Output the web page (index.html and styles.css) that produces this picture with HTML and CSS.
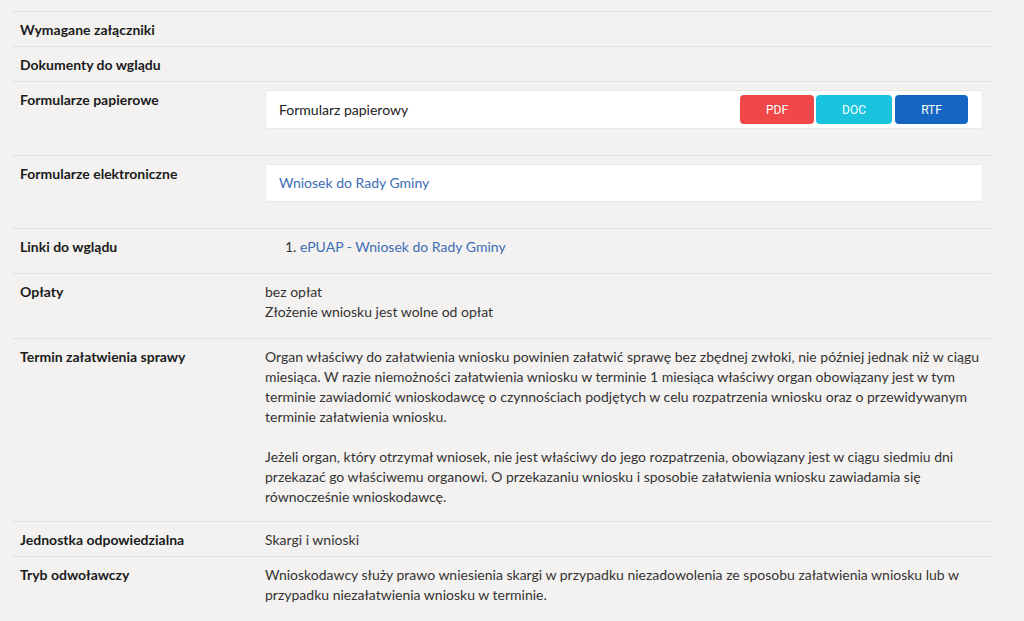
FILE: index.html
```html
<!DOCTYPE html>
<html lang="pl">
<head>
    <meta charset="UTF-8">
    <meta name="viewport" content="width=device-width, initial-scale=1.0">
    <title>Wniosek do Rady Gminy</title>
    <link rel="stylesheet" href="styles.css">
</head>
<body>
    <div class="details">
        <div class="row">
            <div class="label">Wymagane załączniki</div>
            <div class="value"></div>
        </div>
        <div class="row">
            <div class="label">Dokumenty do wglądu</div>
            <div class="value"></div>
        </div>
        <div class="row">
            <div class="label">Formularze papierowe</div>
            <div class="value">
                <div class="file-box">
                    <span class="file-name">Formularz papierowy</span>
                    <div class="file-buttons">
                        <a href="#" class="btn btn-pdf">PDF</a>
                        <a href="#" class="btn btn-doc">DOC</a>
                        <a href="#" class="btn btn-rtf">RTF</a>
                    </div>
                </div>
            </div>
        </div>
        <div class="row">
            <div class="label">Formularze elektroniczne</div>
            <div class="value">
                <div class="file-box text-box">
                    <a href="#" class="link">Wniosek do Rady Gminy</a>
                </div>
            </div>
        </div>
        <div class="row">
            <div class="label">Linki do wglądu</div>
            <div class="value">
                <ol class="links">
                    <li><a href="#" class="link">ePUAP - Wniosek do Rady Gminy</a></li>
                </ol>
            </div>
        </div>
        <div class="row">
            <div class="label">Opłaty</div>
            <div class="value">
                <p>bez opłat<br>Złożenie wniosku jest wolne od opłat</p>
            </div>
        </div>
        <div class="row">
            <div class="label">Termin załatwienia sprawy</div>
            <div class="value">
                <p class="gap">Organ właściwy do załatwienia wniosku powinien załatwić sprawę bez zbędnej zwłoki, nie później jednak niż w ciągu miesiąca. W razie niemożności załatwienia wniosku w terminie 1 miesiąca właściwy organ obowiązany jest w tym terminie zawiadomić wnioskodawcę o czynnościach podjętych w celu rozpatrzenia wniosku oraz o przewidywanym terminie załatwienia wniosku.</p>
                <p class="last">Jeżeli organ, który otrzymał wniosek, nie jest właściwy do jego rozpatrzenia, obowiązany jest w ciągu siedmiu dni przekazać go właściwemu organowi. O przekazaniu wniosku i sposobie załatwienia wniosku zawiadamia się równocześnie wnioskodawcę.</p>
            </div>
        </div>
        <div class="row">
            <div class="label">Jednostka odpowiedzialna</div>
            <div class="value">Skargi i wnioski</div>
        </div>
        <div class="row">
            <div class="label">Tryb odwoławczy</div>
            <div class="value">
                <p>Wnioskodawcy służy prawo wniesienia skargi w przypadku niezadowolenia ze sposobu załatwienia wniosku lub w przypadku niezałatwienia wniosku w terminie.</p>
            </div>
        </div>
    </div>
</body>
</html>
```

FILE: styles.css
```css
body {
    margin: 0;
    padding: 11px 32px 0 12px;
    background: #f3f2f1;
    font-family: Lato, "Liberation Sans", sans-serif;
    font-size: 14px;
    line-height: 20px;
    color: #333;
}
.details {
    display: flex;
    flex-direction: column;
}
.row {
    display: grid;
    grid-template-columns: 253px 1fr;
    border-top: 1px solid #e2e1df;
    padding: 8px 0 6px;
}
.label {
    padding-left: 8px;
    font-weight: bold;
    color: #1b1b1b;
}
.value {
    padding-right: 9px;
}
.value p {
    margin: 0 0 10px;
}
.value p.gap {
    margin-bottom: 20px;
}
.value p.last {
    margin-bottom: 8px;
}
.link {
    color: #3d6db5;
    text-decoration: none;
}
.file-box {
    display: flex;
    align-items: center;
    justify-content: space-between;
    background: #fff;
    border: 1px solid #e9e8e6;
    border-radius: 3px;
    padding: 4px 14px 4px 13px;
    margin-bottom: 20px;
}
.text-box {
    padding: 8px 13px;
}
.file-name {
    color: #222;
}
.file-buttons {
    display: flex;
    gap: 2px;
}
.btn {
    display: flex;
    align-items: center;
    justify-content: center;
    width: 74px;
    height: 29px;
    border-radius: 4px;
    color: #fff;
    text-decoration: none;
    font-family: Roboto, "Liberation Sans", sans-serif;
    font-size: 12px;
}
.btn-pdf {
    background: #f04848;
}
.btn-doc {
    width: 76px;
    margin-right: 1px;
    background: #17c3dd;
}
.btn-rtf {
    width: 73px;
    background: #1565c2;
}
.links {
    margin: 0 0 10px;
    padding-left: 35px;
}
```
